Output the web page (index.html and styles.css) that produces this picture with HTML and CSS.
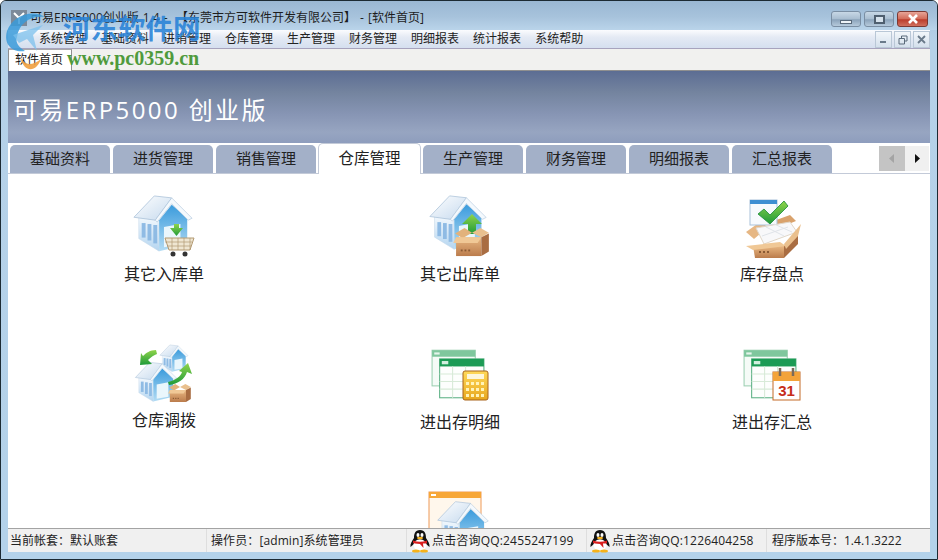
FILE: index.html
```html
<!DOCTYPE html>
<html lang="zh-CN">
<head>
<meta charset="utf-8">
<title>可易ERP5000创业版</title>
<link rel="stylesheet" href="styles.css">
</head>
<body>
<svg class="defs" width="0" height="0">
  <defs>
    <linearGradient id="roof" x1="0" y1="0" x2="1" y2="1"><stop offset="0" stop-color="#fff"/><stop offset="1" stop-color="#c6daee"/></linearGradient>
    <linearGradient id="wall" x1="0" y1="0" x2="0" y2="1"><stop offset="0" stop-color="#f2f8fd"/><stop offset="1" stop-color="#b4d5f0"/></linearGradient>
    <linearGradient id="gable" x1="0" y1="0" x2="0" y2="1"><stop offset="0" stop-color="#3a9bdc"/><stop offset="1" stop-color="#b4dcf4"/></linearGradient>
    <linearGradient id="boxg" x1="0" y1="0" x2="0" y2="1"><stop offset="0" stop-color="#e8b782"/><stop offset="1" stop-color="#bb7c4c"/></linearGradient>
    <linearGradient id="greeng" x1="0" y1="0" x2="0" y2="1"><stop offset="0" stop-color="#8fd44a"/><stop offset="1" stop-color="#1f9a3a"/></linearGradient>
    <linearGradient id="calcg" x1="0" y1="0" x2="0" y2="1"><stop offset="0" stop-color="#ffd95a"/><stop offset="1" stop-color="#e7a71e"/></linearGradient>
    <symbol id="house" viewBox="0 0 64 64">
      <polygon points="7,24 27,27 28,59 7,46" fill="url(#wall)" stroke="#c4d8ea" stroke-width=".6"/>
      <g fill="#8fbbe4"><rect x="10" y="30" width="4" height="15"/><rect x="16" y="31" width="4" height="17"/><rect x="22" y="32" width="4" height="19"/></g>
      <polygon points="28,27 41,11 57,25 57,52 28,59" fill="url(#gable)"/>
      <polygon points="33,34 50,31 50,52 33,55" fill="#eaf6fc"/>
      <polygon points="2,24 23,2 41,4 24,27" fill="url(#roof)" stroke="#a9c1d8" stroke-width=".8"/>
      <polygon points="41,4 62,25 58,27 41,10 26,29 24,27" fill="#f4f9fd" stroke="#a9c1d8" stroke-width=".6"/>
    </symbol>
    <symbol id="box" viewBox="0 0 40 32">
      <polygon points="2,7 12,1 20,6 10,12" fill="#e2b27c"/>
      <polygon points="38,6 29,1 20,6 30,11" fill="#e9c08e"/>
      <polygon points="3,11 30,11 30,31 3,31" fill="url(#boxg)"/>
      <polygon points="30,11 38,7 38,26 30,31" fill="#a96d42"/>
      <polygon points="3,11 30,11 26,17 0,17" fill="#f0c896"/>
      <g fill="#8a5a34"><rect x="8" y="24" width="2" height="2"/><rect x="12" y="24" width="2" height="2"/><rect x="16" y="24" width="2" height="2"/></g>
    </symbol>
    <symbol id="sheet" viewBox="0 0 50 46">
      <rect x="1" y="1" width="40" height="33" fill="#f5fbf7" stroke="#9fd0b4"/>
      <rect x="1" y="1" width="40" height="6" fill="#7fc79d"/>
      <rect x="3" y="3" width="5" height="2" fill="#e5f5ec"/>
      <rect x="8" y="9" width="41" height="36" fill="#fdfefd" stroke="#5fb287"/>
      <rect x="8" y="9" width="41" height="7" fill="#1c9b55"/>
      <rect x="10" y="11" width="6" height="3" fill="#d3efdf"/>
      <path d="M8 23H49M8 30H49M8 37H49M20 16V45M32 16V45" stroke="#d8ead8" fill="none"/>
    </symbol>
    <symbol id="qq" viewBox="0 0 20 24">
      <path d="M10 1C5 1 4 5 4 9 2 12 0 15 .5 18L4 15C5 20 15 20 16 15L19.500 18C20 15 18 12 16 9 16 5 15 1 10 1Z" fill="#111"/>
      <ellipse cx="10" cy="16" rx="6.500" ry="5.800" fill="#fff"/>
      <ellipse cx="8" cy="6" rx="1.500" ry="2" fill="#fff"/><ellipse cx="12" cy="6" rx="1.500" ry="2" fill="#fff"/>
      <ellipse cx="10" cy="9" rx="3" ry="1.300" fill="#f5b21a"/>
      <path d="M3 11.500Q10 14 17 11.500V14.500L13 14.500 13.500 19 10 15 5 14.500 3 14Z" fill="#d81e1e"/>
      <ellipse cx="6" cy="22" rx="4" ry="1.600" fill="#f5b21a"/><ellipse cx="14" cy="22" rx="4" ry="1.600" fill="#f5b21a"/>
    </symbol>
  </defs>
</svg>

<div class="window">
  <header class="titlebar">
    <svg class="app-icon" width="16" height="16" viewBox="0 0 16 16"><rect width="16" height="16" fill="#7c8a9a"/><path d="M3 3L8 8 13 3M8 8V14" stroke="#fff" stroke-width="2" fill="none"/></svg>
    <span class="title-text">可易ERP5000创业版 1.4 -  【东莞市方可软件开发有限公司】 - [软件首页]</span>
    <div class="caption">
      <span class="cap cap-min"><i></i></span>
      <span class="cap cap-max"><i></i></span>
      <span class="cap cap-close"><svg width="14" height="10" viewBox="0 0 14 10"><path d="M3 1L11 9M11 1L3 9" stroke="#fff" stroke-width="2.600"/></svg></span>
    </div>
  </header>

  <nav class="menubar">
    <span>系统管理</span><span>基础资料</span><span>进销管理</span><span>仓库管理</span><span>生产管理</span><span>财务管理</span><span>明细报表</span><span>统计报表</span><span>系统帮助</span>
    <div class="mdi">
      <span class="mdi-btn"><svg width="9" height="9" viewBox="0 0 9 9"><rect x="1" y="6" width="6" height="2" fill="#6a7a8a"/></svg></span>
      <span class="mdi-btn"><svg width="10" height="10" viewBox="0 0 10 10"><path d="M3.500 3V1H9V6H7M1 3.500H6.500V9H1Z" stroke="#5a6a7a" fill="none"/></svg></span>
      <span class="mdi-btn"><svg width="9" height="9" viewBox="0 0 9 9"><path d="M1 1L8 8M8 1L1 8" stroke="#6a7a8a" stroke-width="1.800"/></svg></span>
    </div>
  </nav>

  <div class="docstrip"><span class="doctab">软件首页</span></div>

  <div class="banner">可易ERP5000 创业版</div>

  <div class="tabs">
    <span class="tab">基础资料</span>
    <span class="tab">进货管理</span>
    <span class="tab">销售管理</span>
    <span class="tab tab-on">仓库管理</span>
    <span class="tab">生产管理</span>
    <span class="tab">财务管理</span>
    <span class="tab">明细报表</span>
    <span class="tab">汇总报表</span>
    <div class="scroller">
      <span class="scr scr-l"><svg width="6" height="9" viewBox="0 0 6 9"><path d="M5 0V9L0 4.500Z" fill="#a4a4a4"/></svg></span>
      <span class="scr scr-r"><svg width="6" height="9" viewBox="0 0 6 9"><path d="M1 0V9L6 4.500Z" fill="#111"/></svg></span>
    </div>
  </div>

  <main class="board">
    <a class="item c1">
      <svg class="ic" viewBox="0 0 64 64">
        <use href="#house" width="62" height="62"/>
        <path d="M38 34H42V30H47V34H51L44.500 42Z" fill="url(#greeng)"/>
        <path d="M33 44H62L58 56H37Z" fill="#efe6d2" stroke="#b39a72"/>
        <path d="M33 48H60M35 52H59M40 44V56M46 44V56M52 44V56M58 44V56" stroke="#b39a72" stroke-width=".7" fill="none"/>
        <circle cx="41" cy="60" r="2.500" fill="#333"/><circle cx="53" cy="60" r="2.500" fill="#333"/>
      </svg>
      <span class="lbl">其它入库单</span>
    </a>
    <a class="item c2">
      <svg class="ic" viewBox="0 0 64 64">
        <use href="#house" width="60" height="60"/>
        <path d="M40 40V30H34L44 20 54 30H48V40Z" fill="url(#greeng)"/>
        <use href="#box" x="25" y="33" width="38" height="30"/>
      </svg>
      <span class="lbl">其它出库单</span>
    </a>
    <a class="item c3">
      <svg class="ic" viewBox="0 0 64 64">
        <polygon points="28,29 50,21 56,27 36,35" fill="#d9a26c"/>
        <polygon points="6,38 20,28 28,33 14,45" fill="#e6b784"/>
        <rect x="10" y="6" width="27" height="25" fill="#f7fafd" stroke="#a9c2da"/>
        <rect x="10" y="6" width="27" height="4" fill="#3e8fd2"/>
        <polygon points="16,34 50,28 57,38 24,50" fill="#f8f8fa" stroke="#e0d6c8"/>
        <path d="M26 33L44 42M34 30L52 38M22 42L48 33" stroke="#dfe3e8" fill="none"/>
        <polygon points="13,52 44,52 44,64 15,64" fill="url(#boxg)"/>
        <polygon points="44,52 58,38 58,50 44,64" fill="#a96d42"/>
        <polygon points="6,52 40,48 46,52 13,56" fill="#f0c896"/>
        <polygon points="44,50 61,30 58,42 46,55" fill="#eac08e"/>
        <g fill="#8a5a34"><rect x="19" y="57" width="2" height="2"/><rect x="23" y="57" width="2" height="2"/><rect x="27" y="57" width="2" height="2"/></g>
        <path d="M18 20L24 15 30 21 44 7 48 12 30 30Z" fill="url(#greeng)" stroke="#198a3a" stroke-width=".8"/>
      </svg>
      <span class="lbl">库存盘点</span>
    </a>

    <a class="item c1 row2">
      <svg class="ic" viewBox="0 0 64 64">
        <use href="#house" x="27" y="0" width="30" height="30"/>
        <use href="#house" x="2" y="17" width="44" height="44"/>
        <path d="M24 6C18 6 14 9 11 12L9 9 8 21 20 20 16 16C19 13 22 11 25 10Z" fill="url(#greeng)"/>
        <path d="M36 38C44 36 49 32 50 28L47 27 56 19 60 30 55 28C53 35 46 40 37 41Z" fill="url(#greeng)"/>
        <use href="#box" x="36" y="38" width="24" height="22"/>
      </svg>
      <span class="lbl">仓库调拨</span>
    </a>
    <a class="item c2 row2">
      <svg class="ic" viewBox="0 0 64 64">
        <use href="#sheet" x="3" y="5" width="54" height="50"/>
        <rect x="35" y="27" width="25" height="29" rx="2" fill="url(#calcg)" stroke="#a8641c"/>
        <rect x="39" y="30" width="17" height="5" fill="#fdf6dc"/>
        <g fill="#fff3b8"><rect x="38" y="38" width="3" height="3"/><rect x="43" y="38" width="3" height="3"/><rect x="48" y="38" width="3" height="3"/><rect x="53" y="38" width="3" height="3"/><rect x="38" y="44" width="3" height="3"/><rect x="43" y="44" width="3" height="3"/><rect x="48" y="44" width="3" height="3"/><rect x="53" y="44" width="3" height="3"/><rect x="38" y="50" width="3" height="3"/><rect x="43" y="50" width="3" height="3"/><rect x="48" y="50" width="3" height="3"/><rect x="53" y="50" width="3" height="3"/></g>
      </svg>
      <span class="lbl">进出存明细</span>
    </a>
    <a class="item c3 row2">
      <svg class="ic" viewBox="0 0 64 64">
        <use href="#sheet" x="3" y="5" width="54" height="50"/>
        <rect x="33" y="28" width="27" height="28" fill="#fff" stroke="#c46a26"/>
        <rect x="33" y="28" width="27" height="9" fill="#f3a33a"/>
        <path d="M40 24V32M53 24V32" stroke="#7a6a5a" stroke-width="2.500"/>
        <text class="cal" x="46.500" y="52" text-anchor="middle">31</text>
      </svg>
      <span class="lbl">进出存汇总</span>
    </a>

    <a class="item c2 row3">
      <svg class="ic" viewBox="0 0 64 64">
        <rect x="1" y="1" width="52" height="60" fill="#fff7ec" stroke="#ee9a58"/>
        <rect x="1" y="1" width="52" height="6" fill="#f7a738"/>
        <rect x="3" y="3" width="5" height="2" fill="#fff"/>
        <use href="#house" x="8" y="9" width="54" height="54"/>
      </svg>
    </a>
  </main>

  <footer class="status">
    <span class="cell w1">当前帐套：默认账套</span>
    <span class="cell w2">操作员：[admin]系统管理员</span>
    <span class="cell w3"><svg class="qq" width="20" height="24"><use href="#qq" width="20" height="24"/></svg>点击咨询QQ:2455247199</span>
    <span class="cell w3"><svg class="qq" width="20" height="24"><use href="#qq" width="20" height="24"/></svg>点击咨询QQ:1226404258</span>
    <span class="cell w4">程序版本号：1.4.1.3222</span>
  </footer>

  <div class="watermark" aria-hidden="true">
    <svg class="wm-logo" width="64" height="62" viewBox="0 0 64 62">
      <path d="M6 22C12 6 32 0 44 8 30 6 18 14 16 28 14 34 18 38 24 42 12 44 2 36 6 22Z" fill="#3a9ad9" opacity=".85"/>
      <path d="M19 48C24 56 30 58 40 50 36 62 24 66 19 48Z" fill="#f0a040" opacity=".9"/>
      <path d="M12 26L42 16 32 26 36 42 26 30 18 34Z" fill="#7cc0ec" opacity=".75"/>
    </svg>
    <span class="wm-cn">河东软件网</span>
    <span class="wm-url">www.pc0359.cn</span>
  </div>
</div>
</body>
</html>
```
FILE: styles.css
```css
* { box-sizing: border-box; }
html, body { margin: 0; padding: 0; }
body { width: 938px; height: 560px; overflow: hidden; background: #fff; font-family: "Open Sans", "Noto Sans CJK SC", sans-serif; font-size: 12px; color: #1a1a1a; }
.defs { position: absolute; }

.window { position: relative; width: 938px; height: 560px; padding: 0 7px 7px; border: 1px solid #1c2a33; border-radius: 6px 6px 0 0; background: linear-gradient(180deg, #a5c2dc 0, #b5d1e8 40px, #b4d2ea 100%); display: flex; flex-direction: column; overflow: hidden; }

.titlebar { display: flex; align-items: center; height: 29px; flex: none; margin: 0 -7px; padding: 4px 9px 0 10px; background: linear-gradient(180deg, #9ab7d3 0, #a7c3dc 16px, #bad4ea 29px); }
.app-icon { flex: none; margin-top: 1px; }
.title-text { margin-left: 3px; white-space: pre; color: #1d1d1d; line-height: 16px; word-spacing: 1px; }
.caption { margin-left: auto; display: flex; gap: 3px; align-self: flex-start; margin-top: 6px; }
.cap { display: flex; align-items: center; justify-content: center; height: 16px; border: 1px solid #7a8ea3; border-radius: 3px; background: linear-gradient(180deg, #c8d8e6 0, #a8bdd0 50%, #8ba3ba 55%, #b6cadc 100%); }
.cap-min { width: 30px; }
.cap-min i { width: 12px; height: 4px; margin-top: 5px; background: #eef3f7; border: 1px solid #59697a; }
.cap-max { width: 30px; }
.cap-max i { width: 11px; height: 9px; background: #d6e2ec; border: 2px solid #4f5f6f; }
.cap-close { width: 31px; border-color: #7c3a34; background: linear-gradient(180deg, #e7a598 0, #d26a58 50%, #bb3d2c 55%, #d1705e 100%); }

.menubar { display: flex; align-items: center; height: 19px; flex: none; padding: 0 0 0 31px; gap: 14px; background: linear-gradient(180deg, #fbfcfe 0, #e4eaf4 40%, #d5dfef 100%); border-bottom: 1px solid #a7a3bd; line-height: 18px; color: #222; }
.menubar span { white-space: nowrap; }
.mdi { margin-left: auto; display: flex; gap: 2px; align-self: flex-start; margin-top: 1px; }
.menubar .mdi-btn { display: flex; align-items: center; justify-content: center; width: 17px; height: 17px; border: 1px solid #b9c7d6; background: linear-gradient(180deg, #f2f6fa, #d4e0ec); }

.docstrip { height: 22px; flex: none; background: #f1f1ef; border-bottom: 1px solid #8f8f8f; }
.doctab { display: block; width: 64px; height: 22px; padding-left: 6px; background: #fff; border: 1px solid #8f8f8f; border-top-color: #aaa; border-bottom: 0; line-height: 20px; font-size: 12px; }

.banner { height: 72px; flex: none; padding: 21px 0 0 5px; background: linear-gradient(180deg, #5c6d93 0, #74849f 30%, #8795b4 60%, #97a5c1 85%, #8e9dbd 100%); color: #fff; font-size: 24px; line-height: 36px; letter-spacing: 2.400px; white-space: nowrap; }

.tabs { display: flex; align-items: flex-end; height: 31px; flex: none; padding-left: 2px; gap: 3px; background: #fff; border-bottom: 1px solid #c3cad8; position: relative; }
.tab { display: flex; align-items: center; justify-content: center; width: 100px; height: 28px; padding-bottom: 2px; background: #a3b0c8; border-radius: 5px 5px 0 0; font-size: 15px; line-height: 20px; color: #222; }
.tab-on { width: 103px; height: 31px; margin: 0 -1px -1px -1px; background: #fff; border: 1px solid #c3cad8; border-bottom: 0; font-size: 15.500px; padding-bottom: 3px; }
.scroller { position: absolute; right: 1px; top: 3px; display: flex; height: 25px; }
.scr { display: flex; align-items: center; justify-content: center; }
.scr-l { width: 26px; background: #c4c4c4; }
.scr-r { width: 24px; background: #f0f0f0; }

.board { flex: 1; min-height: 0; overflow: hidden; background: #fff; display: grid; grid-template-columns: 312px 296px 1fr; grid-template-rows: 150px 147px 1fr; padding-top: 20px; }
.item { display: flex; flex-direction: column; align-items: center; }
.c1 { grid-column: 1; }
.c2 { grid-column: 2; padding-right: 16px; }
.c3 { grid-column: 3; padding-right: 2px; }
.row2 { grid-row: 2; }
.row3 { grid-row: 3; }
.ic { width: 64px; height: 64px; flex: none; }
.lbl { margin-top: 6px; font-size: 16px; line-height: 20px; color: #222; white-space: nowrap; }
.row2 .lbl { margin-top: 4px; }
.c1.row2 .lbl { margin-top: 2px; }
.cal { font-family: "Liberation Sans", sans-serif; font-weight: 700; font-size: 15px; fill: #c62d1a; }

.status { display: flex; height: 24px; flex: none; background: #f0f0f0; border-top: 1px solid #a3a3a3; line-height: 22px; color: #222; }
.cell { display: flex; align-items: center; white-space: nowrap; border-right: 1px solid #dedede; padding-left: 2px; }
.w1 { width: 199px; padding-left: 2px; }
.w2 { width: 200px; padding-left: 4px; letter-spacing: .1px; }
.w3 { width: 180px; padding-left: 3px; letter-spacing: .18px; }
.w4 { flex: 1; padding-left: 5px; border-right: 0; }
.qq { flex: none; margin-right: 2px; }

.watermark { position: absolute; left: 0; top: 0; width: 240px; height: 70px; pointer-events: none; }
.wm-logo { position: absolute; left: 0; top: 8px; }
.wm-cn { position: absolute; left: 62px; top: 11px; font-size: 27.500px; line-height: 34px; font-weight: 700; color: rgba(40, 130, 215, .9); white-space: nowrap; }
.wm-url { position: absolute; left: 66px; top: 46px; font-family: "Liberation Serif", serif; font-size: 20px; line-height: 22px; font-weight: 700; color: #4f9a3c; white-space: nowrap; }
```
